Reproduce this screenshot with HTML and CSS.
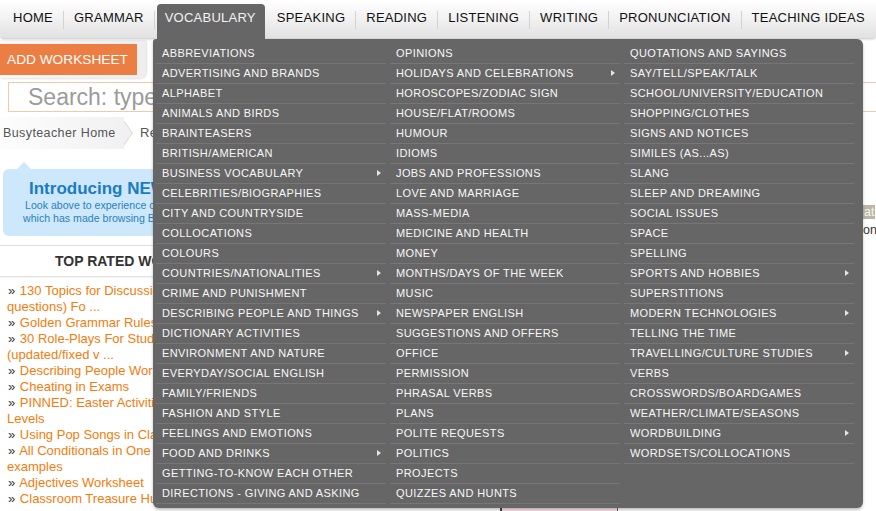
FILE: index.html
```html
<!DOCTYPE html>
<html lang="en">
<head>
<meta charset="utf-8">
<title>BusyTeacher</title>
<link rel="stylesheet" href="styles.css">
</head>
<body>
<header class="nav">
  <ul class="nav-list">
    <li class="nav-item">HOME</li>
    <li class="nav-item">GRAMMAR</li>
    <li class="nav-item active">VOCABULARY</li>
    <li class="nav-item">SPEAKING</li>
    <li class="nav-item">READING</li>
    <li class="nav-item">LISTENING</li>
    <li class="nav-item">WRITING</li>
    <li class="nav-item">PRONUNCIATION</li>
    <li class="nav-item last">TEACHING IDEAS</li>
  </ul>
  <div class="dropdown">
    <ul class="menu-col">
      <li class="menu-item">ABBREVIATIONS</li>
      <li class="menu-item">ADVERTISING AND BRANDS</li>
      <li class="menu-item">ALPHABET</li>
      <li class="menu-item">ANIMALS AND BIRDS</li>
      <li class="menu-item">BRAINTEASERS</li>
      <li class="menu-item">BRITISH/AMERICAN</li>
      <li class="menu-item sub">BUSINESS VOCABULARY</li>
      <li class="menu-item">CELEBRITIES/BIOGRAPHIES</li>
      <li class="menu-item">CITY AND COUNTRYSIDE</li>
      <li class="menu-item">COLLOCATIONS</li>
      <li class="menu-item">COLOURS</li>
      <li class="menu-item sub">COUNTRIES/NATIONALITIES</li>
      <li class="menu-item">CRIME AND PUNISHMENT</li>
      <li class="menu-item sub">DESCRIBING PEOPLE AND THINGS</li>
      <li class="menu-item">DICTIONARY ACTIVITIES</li>
      <li class="menu-item">ENVIRONMENT AND NATURE</li>
      <li class="menu-item">EVERYDAY/SOCIAL ENGLISH</li>
      <li class="menu-item">FAMILY/FRIENDS</li>
      <li class="menu-item">FASHION AND STYLE</li>
      <li class="menu-item">FEELINGS AND EMOTIONS</li>
      <li class="menu-item sub">FOOD AND DRINKS</li>
      <li class="menu-item">GETTING-TO-KNOW EACH OTHER</li>
      <li class="menu-item">DIRECTIONS - GIVING AND ASKING</li>
    </ul>
    <ul class="menu-col">
      <li class="menu-item">OPINIONS</li>
      <li class="menu-item sub">HOLIDAYS AND CELEBRATIONS</li>
      <li class="menu-item">HOROSCOPES/ZODIAC SIGN</li>
      <li class="menu-item">HOUSE/FLAT/ROOMS</li>
      <li class="menu-item">HUMOUR</li>
      <li class="menu-item">IDIOMS</li>
      <li class="menu-item">JOBS AND PROFESSIONS</li>
      <li class="menu-item">LOVE AND MARRIAGE</li>
      <li class="menu-item">MASS-MEDIA</li>
      <li class="menu-item">MEDICINE AND HEALTH</li>
      <li class="menu-item">MONEY</li>
      <li class="menu-item">MONTHS/DAYS OF THE WEEK</li>
      <li class="menu-item">MUSIC</li>
      <li class="menu-item">NEWSPAPER ENGLISH</li>
      <li class="menu-item">SUGGESTIONS AND OFFERS</li>
      <li class="menu-item">OFFICE</li>
      <li class="menu-item">PERMISSION</li>
      <li class="menu-item">PHRASAL VERBS</li>
      <li class="menu-item">PLANS</li>
      <li class="menu-item">POLITE REQUESTS</li>
      <li class="menu-item">POLITICS</li>
      <li class="menu-item">PROJECTS</li>
      <li class="menu-item">QUIZZES AND HUNTS</li>
    </ul>
    <ul class="menu-col">
      <li class="menu-item">QUOTATIONS AND SAYINGS</li>
      <li class="menu-item">SAY/TELL/SPEAK/TALK</li>
      <li class="menu-item">SCHOOL/UNIVERSITY/EDUCATION</li>
      <li class="menu-item">SHOPPING/CLOTHES</li>
      <li class="menu-item">SIGNS AND NOTICES</li>
      <li class="menu-item">SIMILES (AS...AS)</li>
      <li class="menu-item">SLANG</li>
      <li class="menu-item">SLEEP AND DREAMING</li>
      <li class="menu-item">SOCIAL ISSUES</li>
      <li class="menu-item">SPACE</li>
      <li class="menu-item">SPELLING</li>
      <li class="menu-item sub">SPORTS AND HOBBIES</li>
      <li class="menu-item">SUPERSTITIONS</li>
      <li class="menu-item sub">MODERN TECHNOLOGIES</li>
      <li class="menu-item">TELLING THE TIME</li>
      <li class="menu-item sub">TRAVELLING/CULTURE STUDIES</li>
      <li class="menu-item">VERBS</li>
      <li class="menu-item">CROSSWORDS/BOARDGAMES</li>
      <li class="menu-item">WEATHER/CLIMATE/SEASONS</li>
      <li class="menu-item sub">WORDBUILDING</li>
      <li class="menu-item">WORDSETS/COLLOCATIONS</li>
    </ul>
  </div>
</header>

<div class="toolbar">
  <div class="panel"><span class="add-btn">ADD WORKSHEET</span></div>
</div>
<div class="search">Search: type words to find worksheets</div>
<nav class="crumbs">
  <span class="crumb first">Busyteacher Home</span>
  <span class="crumb">Resources</span>
</nav>

<div class="columns">
  <aside class="sidebar">
    <div class="intro">
      <div class="intro-title">Introducing NEW Navigation</div>
      <div class="intro-line l1">Look above to experience our new navigation menu,</div>
      <div class="intro-line l2">which has made browsing BusyTeacher even easier</div>
    </div>
    <div class="top-rated">
      <h2 class="top-title">TOP RATED WORKSHEETS</h2>
      <ul class="top-list">
        <li><span class="raquo">»</span> <a>130 Topics for Discussion (with<br>questions) Fo ...</a></li>
        <li><span class="raquo">»</span> <a>Golden Grammar Rules</a></li>
        <li><span class="raquo">»</span> <a>30 Role-Plays For Students<br>(updated/fixed v ...</a></li>
        <li><span class="raquo">»</span> <a>Describing People Worksheet</a></li>
        <li><span class="raquo">»</span> <a>Cheating in Exams</a></li>
        <li><span class="raquo">»</span> <a>PINNED: Easter Activities for All<br>Levels</a></li>
        <li><span class="raquo">»</span> <a>Using Pop Songs in Class</a></li>
        <li><span class="raquo">»</span> <a>All Conditionals in One with<br>examples</a></li>
        <li><span class="raquo">»</span> <a>Adjectives Worksheet</a></li>
        <li><span class="raquo">»</span> <a>Classroom Treasure Hunt</a></li>
      </ul>
    </div>
  </aside>
  <main class="main">
    <p class="frag"><span class="hl">at</span></p>
    <p class="frag">on</p>
    <div class="pink"></div>
  </main>
</div>
</body>
</html>
```
FILE: styles.css
```css
* { box-sizing: border-box; }

body {
  margin: 0;
  width: 876px;
  height: 511px;
  overflow: hidden;
  background: #fff;
  font-family: Arial, "Liberation Sans", sans-serif;
}

/* ---------- top navigation ---------- */
.nav {
  position: relative;
  height: 39px;
  background: linear-gradient(#ffffff 0%, #f3f3f3 45%, #e1e1e1 100%);
  border-bottom: 1px solid #d6d6d6;
  border-radius: 0 0 4px 4px;
  box-shadow: 0 1px 2px rgba(0, 0, 0, 0.12);
  z-index: 5;
}

.nav-list {
  display: flex;
  margin: 0;
  padding: 0 0 0 3px;
  list-style: none;
  height: 38px;
}

.nav-item {
  position: relative;
  padding: 0 10px;
  font-size: 13px;
  letter-spacing: 0.25px;
  line-height: 36px;
  color: #111;
  white-space: nowrap;
  margin-right: 1px;
}

.nav-item::after {
  content: "";
  position: absolute;
  right: -1px;
  top: 11px;
  width: 1px;
  height: 18px;
  background: #d2d2d2;
}

.nav-item.last::after { display: none; }

.nav-item.active {
  margin-top: 4px;
  height: 35px;
  padding: 0 9px 0 8px;
  margin-left: 2px;
  margin-right: 2px;
  line-height: 28px;
  background: #666;
  color: #f2f2f2;
  border-radius: 4px 4px 0 0;
}

.nav-item.active::after { display: none; }

/* ---------- dropdown ---------- */
.dropdown {
  position: absolute;
  top: 39px;
  left: 153px;
  width: 710px;
  height: 469px;
  padding: 5px 9px 4px 3px;
  background: #666;
  border-radius: 3px 6px 6px 6px;
  box-shadow: 0 2px 3px rgba(0, 0, 0, 0.25);
  display: grid;
  grid-template-columns: repeat(3, 230px);
  column-gap: 4px;
  align-items: start;
}

.menu-col {
  list-style: none;
  margin: 0;
  padding: 0;
}

.menu-item {
  position: relative;
  height: 20px;
  padding-left: 6px;
  border-bottom: 1px solid #767676;
  font-size: 11px;
  letter-spacing: 0.4px;
  line-height: 19px;
  color: #f8f8f8;
  white-space: nowrap;
}

.menu-item.sub::after {
  content: "";
  position: absolute;
  right: 5px;
  top: 6px;
  border-left: 4px solid #e6e6e6;
  border-top: 3.5px solid transparent;
  border-bottom: 3.5px solid transparent;
}

/* ---------- page body ---------- */
.toolbar {
  height: 39px;
  padding-top: 1px;
}

.panel {
  width: 146px;
  height: 38px;
  padding-top: 4px;
  background: linear-gradient(90deg, #f7f7f7 0%, #eeeeee 100%);
  border-radius: 0 0 7px 0;
  box-shadow: 1px 1px 2px rgba(0, 0, 0, 0.12);
}

.add-btn {
  display: block;
  width: 137px;
  height: 31px;
  padding-left: 7px;
  background: #ec7e43;
  color: #fff;
  font-size: 13.7px;
  line-height: 31px;
  white-space: nowrap;
}

.search {
  margin: 4px 0 0 8px;
  width: 1000px;
  height: 30px;
  border: 1px solid #f3caa6;
  padding-left: 19px;
  font-size: 23px;
  line-height: 28px;
  color: #9b9b9b;
  white-space: nowrap;
}

.crumbs {
  display: flex;
  height: 32px;
  margin-top: 5px;
  overflow: hidden;
}

.crumb {
  position: relative;
  font-size: 12.5px;
  letter-spacing: 0.4px;
  line-height: 32px;
  color: #555;
  white-space: nowrap;
  padding-left: 12px;
}

.crumb.first {
  width: 124px;
  padding-left: 3px;
  background: linear-gradient(90deg, #fdfdfd, #f1f1f1);
}

.crumb.first::after {
  content: "";
  position: absolute;
  z-index: -1;
  right: -7px;
  top: 5px;
  width: 21px;
  height: 21px;
  background: #f1f1f1;
  border-top: 1px solid #dcdcdc;
  border-right: 1px solid #dcdcdc;
  transform: rotate(45deg) skew(10deg, 10deg);
}

.crumb.first + .crumb { padding-left: 16px; font-size: 13px; }

.columns {
  display: flex;
}

.sidebar {
  width: 240px;
  flex: none;
}

.intro {
  position: relative;
  margin: 20px 0 0 3px;
  height: 67px;
  padding: 10px 0 0 0;
  background: #cde8fa;
  border-radius: 6px;
  color: #1b7bc3;
  white-space: nowrap;
}

.intro::before {
  content: "";
  position: absolute;
  left: 14px;
  top: -7px;
  border-bottom: 7px solid #cde8fa;
  border-left: 7px solid transparent;
  border-right: 7px solid transparent;
}

.intro-title {
  padding-left: 26px;
  font-size: 17px;
  font-weight: bold;
  line-height: 20px;
}

.intro-line {
  font-size: 10.6px;
  line-height: 13px;
  color: #2a7fc2;
}

.intro-line.l1 { padding-left: 22px; }
.intro-line.l2 { padding-left: 20px; }

.top-rated {
  margin-top: 9px;
  border-top: 1px solid #dedede;
}

.top-title {
  margin: 0;
  height: 31px;
  padding-left: 55px;
  font-size: 14px;
  line-height: 30px;
  color: #333;
  white-space: nowrap;
  border-bottom: 1px solid #e2e2e2;
  box-shadow: 0 1px 2px rgba(0, 0, 0, 0.06);
}

.top-list {
  list-style: none;
  margin: 0;
  padding: 6px 0 0 7px;
  font-size: 13px;
  line-height: 16px;
  white-space: nowrap;
}

.raquo { color: #333; margin-left: 1px; margin-right: 1px; }

.top-list a { color: #f27c0d; }

.main {
  flex: 1;
  padding-top: 55px;
}

.frag {
  margin: 0 0 2px 623px;
  font-size: 12.5px;
  line-height: 16px;
  color: #333;
  white-space: nowrap;
}

.hl {
  background: #bdb6a5;
  color: #f4f4f4;
  padding: 0 1px;
}

.pink {
  margin: 264px 0 0 260px;
  width: 118px;
  height: 20px;
  background: #fbe3ee;
  border-left: 2px solid #444;
  border-right: 1px solid #666;
}
```
